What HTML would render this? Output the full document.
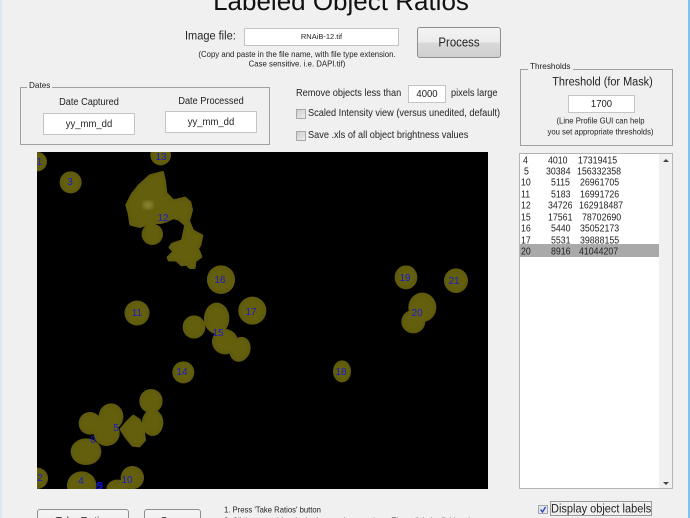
<!DOCTYPE html>
<html>
<head>
<meta charset="utf-8">
<style>
html,body{margin:0;padding:0;width:690px;height:518px;overflow:hidden;background:#f0f0f0}
#p{position:relative;width:690px;height:518px;overflow:hidden;background:#f0f0f0;font-family:"Liberation Sans",sans-serif;color:#222;filter:blur(.3px)}
.t{position:absolute;white-space:nowrap;line-height:1}
.s{transform:scaleY(1.1)}
.i{display:inline-block;transform:scaleY(1.1)}
.c{text-align:center}
.box{position:absolute;background:#fff;border:1px solid #c4c4c4;box-sizing:border-box;text-align:center;color:#222;white-space:nowrap}
.grp{position:absolute;border:1px solid #a0a0a0;box-sizing:border-box}
.leg{position:absolute;background:#f0f0f0;font-size:8.2px;line-height:10px;padding:0 2px;color:#222;white-space:nowrap}
.btn{position:absolute;box-sizing:border-box;border:1px solid #8e8e8e;border-radius:3px;background:linear-gradient(#f4f4f4 0,#ebebeb 48%,#d9d9d9 52%,#cfcfcf 100%);text-align:center;color:#222}
.cb{position:absolute;width:10px;height:9.5px;box-sizing:border-box;border:1px solid #a8a8a8;background:linear-gradient(135deg,#cfcfcf,#ececec)}
.row{position:absolute;left:520px;width:139px;height:12px;font-size:8.8px;line-height:12px;color:#222}
.row span{position:absolute;top:0;white-space:nowrap;transform:scaleY(1.12)}
</style>
</head>
<body>
<div id="p">
<div style="position:absolute;left:0;top:0;width:2px;height:518px;background:#dbe7f4"></div>
<div style="position:absolute;right:0;top:0;width:2px;height:518px;background:#7cc4ee"></div>

<div class="t c" style="left:141px;width:400px;top:-12px;font-size:26px;color:#111">Labeled Object Ratios</div>

<div class="t s" style="left:185px;top:31px;font-size:11px">Image file:</div>
<div class="box" style="left:244px;top:28px;width:155px;height:18px;font-size:7.5px;line-height:16px">RNAiB-12.tif</div>
<div class="t c s" style="left:97px;width:400px;top:49.5px;font-size:7.8px;line-height:9.1px">(Copy and paste in the file name, with file type extension.<br>Case sensitive. i.e. DAPI.tif)</div>
<div class="btn" style="left:417px;top:27px;width:84px;height:31px;font-size:11.4px;line-height:30px"><span class="i">Process</span></div>

<div class="grp" style="left:20px;top:87px;width:250px;height:58px"></div>
<div class="leg" style="left:27px;top:81px">Dates</div>
<div class="t c s" style="left:43px;width:92px;top:98px;font-size:9.2px">Date Captured</div>
<div class="t c s" style="left:165px;width:92px;top:97px;font-size:9.2px">Date Processed</div>
<div class="box" style="left:43px;top:113px;width:92px;height:22px;font-size:9.5px;line-height:21px"><span class="i">yy_mm_dd</span></div>
<div class="box" style="left:165px;top:111px;width:92px;height:22px;font-size:9.5px;line-height:21px"><span class="i">yy_mm_dd</span></div>

<div class="t s" style="left:296px;top:89px;font-size:9.2px">Remove objects less than</div>
<div class="box" style="left:408px;top:85px;width:38px;height:18px;font-size:9.5px;line-height:18px"><span class="i">4000</span></div>
<div class="t s" style="left:451px;top:88.5px;font-size:9.2px">pixels large</div>
<div class="cb" style="left:296px;top:109px"></div>
<div class="t s" style="left:308px;top:109px;font-size:9.2px">Scaled Intensity view (versus unedited, default)</div>
<div class="cb" style="left:296px;top:131px"></div>
<div class="t s" style="left:308px;top:131px;font-size:9.2px">Save .xls of all object brightness values</div>

<div class="grp" style="left:520px;top:69px;width:153px;height:77px"></div>
<div class="leg" style="left:528px;top:62px">Thresholds</div>
<div class="t c s" style="left:526px;width:153px;top:77px;font-size:10.9px">Threshold (for Mask)</div>
<div class="box" style="left:568px;top:95px;width:67px;height:18px;font-size:9.5px;line-height:18px"><span class="i">1700</span></div>
<div class="t c s" style="left:524px;width:153px;top:117px;font-size:7.7px;line-height:9.6px">(Line Profile GUI can help<br>you set appropriate thresholds)</div>

<svg style="position:absolute;left:37px;top:152px" width="451" height="337" viewBox="37 152 451 337">
<defs>
<filter id="b" x="-5%" y="-5%" width="110%" height="110%">
<feGaussianBlur in="SourceAlpha" stdDeviation="1.6" result="a"/>
<feFlood flood-color="#635e10"/>
<feComposite in2="a" operator="in" result="c"/>
<feComposite in="c" in2="SourceAlpha" operator="in" result="d"/>
<feMerge result="m"><feMergeNode in="SourceGraphic"/><feMergeNode in="d"/></feMerge>
<feGaussianBlur in="m" stdDeviation=".35"/>
</filter>
<filter id="h"><feGaussianBlur stdDeviation="2"/></filter>
</defs>
<rect x="37" y="152" width="451" height="337" fill="#000"/>
<g fill="#57530b" filter="url(#b)">
<g transform="translate(30 150) scale(.3333)">
<circle cx="22" cy="35" r="29"/>
<circle cx="122" cy="97" r="33"/>
<circle cx="392" cy="15" r="31"/>
<path stroke="#57530b" stroke-width="8" stroke-linejoin="round" d="M398 67 L404 95 L408 130 L430 152 L465 144 L480 157 L485 180 L476 213 L488 242 L516 257 L510 285 L503 295 L513 320 L495 333 L493 353 L480 353 L470 343 L455 345 L440 331 L417 330 L414 322 L432 305 L420 292 L427 282 L457 272 L467 225 L447 208 L430 203 L410 213 L392 218 L365 218 L330 230 L302 223 L297 190 L290 165 L307 132 L327 107 L360 77 Z"/>
<circle cx="367" cy="253" r="32"/>
<circle cx="573" cy="388" r="42"/>
</g>
<circle cx="137" cy="313" r="12.5"/>
<g transform="translate(170 260) scale(.3333)">
<ellipse cx="153" cy="60" rx="42" ry="42"/>
<circle cx="247" cy="152" r="42"/>
<ellipse cx="708" cy="52" rx="34" ry="36"/>
<ellipse cx="858" cy="62" rx="36" ry="37"/>
<ellipse cx="757" cy="142" rx="42" ry="44"/>
<ellipse cx="730" cy="185" rx="36" ry="35"/>
<ellipse cx="140" cy="175" rx="38" ry="47"/>
<ellipse cx="72" cy="201" rx="34" ry="35"/>
<ellipse cx="165" cy="245" rx="39" ry="38"/>
<ellipse cx="210" cy="268" rx="31" ry="38" transform="rotate(20 210 268)"/>
<circle cx="40" cy="337" r="33"/>
<ellipse cx="516" cy="334" rx="27" ry="33"/>
</g>
<g transform="translate(0 380) scale(.3333)">
<circle cx="270" cy="130" r="34"/>
<ellipse cx="333" cy="110" rx="37" ry="40"/>
<ellipse cx="320" cy="160" rx="39" ry="38"/>
<ellipse cx="258" cy="215" rx="46" ry="40"/>
<path stroke="#57530b" stroke-width="8" stroke-linejoin="round" d="M400 108 L418 120 L430 150 L434 180 L418 198 L398 196 L377 170 L363 148 L380 127 Z"/>
<ellipse cx="458" cy="128" rx="32" ry="40"/>
<ellipse cx="453" cy="63" rx="35" ry="36"/>
<circle cx="112" cy="295" r="32"/>
<ellipse cx="245" cy="316" rx="44" ry="42"/>
<circle cx="397" cy="293" r="35"/>
<ellipse cx="352" cy="328" rx="33" ry="29"/>
</g>
</g>
<ellipse cx="148" cy="205" rx="5" ry="4" fill="#8a8535" filter="url(#h)"/>
<g font-family="Liberation Sans" font-size="10" fill="#1a1ad0" text-anchor="middle">
<text x="39.5" y="165">1</text>
<text x="70" y="185">3</text>
<text x="161" y="160">13</text>
<text x="163" y="221">12</text>
<text x="220" y="283">16</text>
<text x="137" y="316">11</text>
<text x="251" y="315">17</text>
<text x="218" y="336">15</text>
<text x="182" y="375">14</text>
<text x="341" y="375">18</text>
<text x="405" y="281">19</text>
<text x="454" y="284">21</text>
<text x="417" y="316">20</text>
<text x="116" y="431">5</text>
<text x="93" y="443">6</text>
<text x="40" y="481">2</text>
<text x="81" y="484">4</text>
<text x="127" y="483">10</text>
</g>
</svg>
<div class="t" style="left:96px;top:482px;font-size:10px;color:#1414e6">8</div>
<div class="t" style="left:97.5px;top:482px;font-size:10px;color:#1414e6">9</div>

<div style="position:absolute;left:519px;top:153px;width:154px;height:336px;box-sizing:border-box;border:1px solid #b4b4b4;background:#fff"></div>
<div style="position:absolute;left:659px;top:154px;width:13px;height:334px;background:#f0f0f0"></div>
<div style="position:absolute;left:663px;top:159px;width:0;height:0;border-left:3px solid transparent;border-right:3px solid transparent;border-bottom:3px solid #444"></div>
<div style="position:absolute;left:663px;top:482px;width:0;height:0;border-left:3px solid transparent;border-right:3px solid transparent;border-top:3px solid #444"></div>
<div style="position:absolute;left:520px;top:244px;width:139px;height:13px;background:#a9a9a9"></div>

<div class="row" style="top:154px"><span style="left:3px">4</span><span style="left:28px">4010</span><span style="left:58px">17319415</span></div>
<div class="row" style="top:165px"><span style="left:4px">5</span><span style="left:26px">30384</span><span style="left:57px">156332358</span></div>
<div class="row" style="top:176px"><span style="left:1px">10</span><span style="left:31px">5115</span><span style="left:60px">26961705</span></div>
<div class="row" style="top:188px"><span style="left:1px">11</span><span style="left:31px">5183</span><span style="left:60px">16991726</span></div>
<div class="row" style="top:199px"><span style="left:1px">12</span><span style="left:28px">34726</span><span style="left:59px">162918487</span></div>
<div class="row" style="top:211px"><span style="left:1px">15</span><span style="left:28px">17561</span><span style="left:62px">78702690</span></div>
<div class="row" style="top:222px"><span style="left:1px">16</span><span style="left:31px">5440</span><span style="left:60px">35052173</span></div>
<div class="row" style="top:234px"><span style="left:1px">17</span><span style="left:31px">5531</span><span style="left:60px">39888155</span></div>
<div class="row" style="top:245px"><span style="left:1px">20</span><span style="left:31px">8916</span><span style="left:59px">41044207</span></div>

<div class="btn" style="left:37px;top:509px;width:92px;height:30px;font-size:10.5px;line-height:23px;background:linear-gradient(#f4f4f4,#e8e8e8)">Take Ratios</div>
<div class="btn" style="left:144px;top:509px;width:57px;height:30px;font-size:10.5px;line-height:23px;background:linear-gradient(#f4f4f4,#e8e8e8)">Save</div>
<div class="t s" style="left:224px;top:505.5px;font-size:7.7px;line-height:9.6px">1. Press 'Take Ratios' button<br>2. Click on an object in the image, then continue. Then click the field to the</div>

<div class="cb" style="left:538px;top:505px;width:10px;height:9px;background:#dfe6f2"></div>
<svg style="position:absolute;left:538px;top:505px" width="10" height="9"><path d="M2.5 4.5 L4.5 7 L7.5 2" fill="none" stroke="#2a3fa8" stroke-width="1.3"/></svg>
<div class="t" style="left:550px;top:501px;box-sizing:border-box;width:102px;height:15px;font-size:11px;border:1px solid #9a9a9a;line-height:14px;overflow:hidden"><span class="i">Display object labels</span></div>
</div>
</body>
</html>
